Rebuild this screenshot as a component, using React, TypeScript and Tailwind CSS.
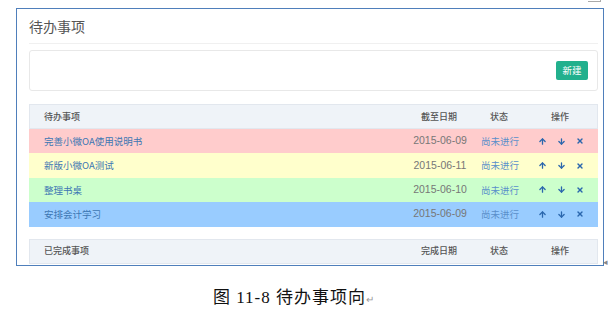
import { ArrowUp, ArrowDown, X } from 'lucide-react';

const cjk = { fontFamily: '"Noto Sans CJK SC", "Noto Sans", sans-serif' };

const todos = [
  { title: '完善小微OA使用说明书', date: '2015-06-09', bg: 'bg-[#ffcccc]' },
  { title: '新版小微OA测试', date: '2015-06-11', bg: 'bg-[#ffffcc]' },
  { title: '整理书桌', date: '2015-06-10', bg: 'bg-[#ccffcc]' },
  { title: '安排会计学习', date: '2015-06-09', bg: 'bg-[#99ccff]' },
];

function HeaderRow({ first, second }: { first: string; second: string }) {
  return (
    <div className="flex items-center h-[25px] bg-[#eff3f8] border border-[#e2e7ee] text-[9px] font-medium text-[#555]">
      <div className="flex-1 pl-[14px]">{first}</div>
      <div className="w-[60px] text-center">{second}</div>
      <div className="w-[60px] text-center">状态</div>
      <div className="w-[62px] text-center">操作</div>
      <div className="w-[6px]" />
    </div>
  );
}

export default function App() {
  return (
    <div className="relative w-[608px] h-[314px] bg-white overflow-hidden" style={cjk}>
      {/* stray page marks */}
      <div className="absolute left-[588px] top-0 w-[13px] h-[2px] border-b border-r border-[#aaa]" />
      <div className="absolute left-[603px] top-[255px] text-[9px] text-[#888]">◂</div>

      {/* Screenshot frame */}
      <div className="ml-[16px] mt-[8px] w-[588px] h-[258px] border border-[#4f7fbb] overflow-hidden pl-[12px] pr-[5px]">
        <div className="h-[34px] flex items-center text-[14px] text-[#555]">待办事项</div>
        <div className="h-[1px] bg-[#f0f0f0]" />

        <div className="mt-[6px] h-[41px] border border-[#e8e8e8] rounded-[3px] flex items-center justify-end pr-[9px]">
          <button className="h-[19px] w-[32px] rounded-[2px] bg-[#22b08d] text-white text-[9.5px] flex items-center justify-center">
            新建
          </button>
        </div>

        <div className="mt-[13px]">
          <HeaderRow first="待办事项" second="截至日期" />
          {todos.map((t, i) => (
            <div key={i} className={`flex items-center h-[24.4px] ${t.bg}`}>
              <div className="flex-1 pl-[15px] text-[9.5px] text-[#3d77b3]">{t.title}</div>
              <div
                className="w-[60px] text-center text-[10.5px] text-[#777]"
                style={{ fontFamily: '"Liberation Sans", Arial, sans-serif' }}
              >
                {t.date}
              </div>
              <div className="w-[60px] text-center text-[9.5px] text-[#5a8fca]">尚未进行</div>
              <div className="w-[62px] flex items-center justify-center gap-[10px] text-[#2a66ad]">
                <ArrowUp size={9} strokeWidth={3.5} />
                <ArrowDown size={9} strokeWidth={3.5} />
                <X size={8} strokeWidth={4} />
              </div>
              <div className="w-[6px]" />
            </div>
          ))}
        </div>

        <div className="mt-[12px]">
          <HeaderRow first="已完成事项" second="完成日期" />
        </div>
      </div>

      {/* Caption */}
      <div className="mt-[19px] pl-[213px]">
        <div
          className="text-[17px] text-[#111] tracking-[1px] whitespace-pre"
          style={{ fontFamily: '"Liberation Serif", "Noto Sans CJK SC", serif' }}
        >
          图 11-8 待办事项向<span className="text-[10px] text-[#999]">↵</span>
        </div>
      </div>
    </div>
  );
}
